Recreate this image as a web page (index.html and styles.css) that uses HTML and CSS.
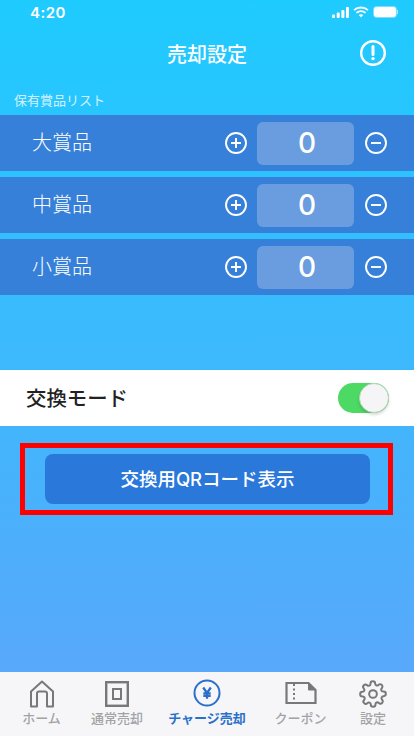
FILE: index.html
```html
<!DOCTYPE html>
<html lang="ja">
<head>
    <meta charset="UTF-8">
    <meta name="viewport" content="width=device-width, initial-scale=1.0">
    <title>売却設定</title>
    <link rel="stylesheet" href="styles.css">
</head>
<body>
<div class="screen">

    <!-- Status bar -->
    <div class="status-bar">
        <span class="status-time">4:20</span>
        <div class="status-icons">
            <svg width="17" height="11" viewBox="0 0 17 11" fill="#fff"><rect x="0" y="7.500" width="3" height="3.500" rx="1"/><rect x="4.700" y="5.500" width="3" height="5.500" rx="1"/><rect x="9.400" y="3" width="3" height="8" rx="1"/><rect x="14" y="0" width="3" height="11" rx="1"/></svg>
            <svg class="wifi" width="16" height="12" viewBox="0 0 16 12" fill="none" stroke="#fff" stroke-width="1.800"><path d="M1 4.200C5 .6 11 .6 15 4.200"/><path d="M3.400 6.800C6 4.500 10 4.500 12.600 6.800"/><path d="M8 11.500l-2.300-2.600c1.300-1 3.300-1 4.600 0z" fill="#fff" stroke="none"/></svg>
            <div class="battery"><div class="battery-body"></div><div class="battery-cap"></div></div>
        </div>
    </div>

    <!-- Header -->
    <div class="header">
        <h1>売却設定</h1>
        <svg class="header-icon" width="26" height="26" viewBox="0 0 26 26" fill="none" stroke="#fff"><circle cx="13" cy="13" r="11.800" stroke-width="2.400"/><path d="M13 6.500v8" stroke-width="3" stroke-linecap="round"/><circle cx="13" cy="18.600" r="1.700" fill="#fff" stroke="none"/></svg>
    </div>

    <div class="list-label">保有賞品リスト</div>

    <div class="prize-list">
        <div class="prize-row">
            <span class="prize-name">大賞品</span>
            <svg class="round-btn" viewBox="0 0 22 22"><circle cx="11" cy="11" r="10"/><path d="M6 11h10M11 6v10"/></svg>
            <div class="count">0</div>
            <svg class="round-btn" viewBox="0 0 22 22"><circle cx="11" cy="11" r="10"/><path d="M6 11h10"/></svg>
        </div>
        <div class="prize-row">
            <span class="prize-name">中賞品</span>
            <svg class="round-btn" viewBox="0 0 22 22"><circle cx="11" cy="11" r="10"/><path d="M6 11h10M11 6v10"/></svg>
            <div class="count">0</div>
            <svg class="round-btn" viewBox="0 0 22 22"><circle cx="11" cy="11" r="10"/><path d="M6 11h10"/></svg>
        </div>
        <div class="prize-row">
            <span class="prize-name">小賞品</span>
            <svg class="round-btn" viewBox="0 0 22 22"><circle cx="11" cy="11" r="10"/><path d="M6 11h10M11 6v10"/></svg>
            <div class="count">0</div>
            <svg class="round-btn" viewBox="0 0 22 22"><circle cx="11" cy="11" r="10"/><path d="M6 11h10"/></svg>
        </div>
    </div>

    <!-- Exchange mode -->
    <div class="mode-row">
        <span class="mode-label">交換モード</span>
        <div class="switch"><div class="switch-knob"></div></div>
    </div>

    <div class="qr-area">
        <div class="qr-frame">
            <button class="qr-button">交換用QRコード表示</button>
        </div>
    </div>

    <!-- Tab bar -->
    <div class="tab-bar">
        <div class="tab tab-home">
            <svg width="28" height="28" viewBox="0 0 28 28" fill="none" stroke="#77777c" stroke-width="2" stroke-linejoin="round"><path d="M3 26.500V11.500L14 1.500l11 10v15h-6V13.500a2 2 0 0 0-2-2h-6a2 2 0 0 0-2 2v13z"/></svg>
            <span>ホーム</span>
        </div>
        <div class="tab tab-normal">
            <svg width="24" height="26" viewBox="0 0 24 26" fill="none" stroke="#77777c"><rect x="1.200" y="1.200" width="21.600" height="23.600" stroke-width="2.400"/><rect x="8" y="8" width="8" height="10" stroke-width="2"/></svg>
            <span>通常売却</span>
        </div>
        <div class="tab tab-charge active">
            <svg width="28" height="28" viewBox="0 0 28 28" fill="none" stroke="#2a70c8" stroke-width="2"><circle cx="14" cy="14" r="12.500"/><path d="M10.200 8.500L14 14l3.800-5.500M14 14v5.800M10.300 14.300h7.400M10.300 16.800h7.400" stroke-width="2.300"/></svg>
            <span>チャージ売却</span>
        </div>
        <div class="tab tab-coupon">
            <svg width="32" height="24" viewBox="0 0 32 24" fill="none" stroke="#77777c" stroke-width="2.200"><path d="M1.500 2h22l7 7v13h-29z"/><path d="M23.500 2l7 7h-7z" fill="#77777c" stroke-width="1"/><path d="M9 3v18" stroke-width="2" stroke-dasharray="2 2.500"/></svg>
            <span>クーポン</span>
        </div>
        <div class="tab tab-setting">
            <svg width="28" height="28" viewBox="0 0 24 24" fill="none" stroke="#77777c" stroke-width="1.700" stroke-linejoin="round"><circle cx="12" cy="12" r="3.300"/><path d="M19.400 15a1.650 1.650 0 0 0 .33 1.820l.06.06a2 2 0 1 1-2.830 2.830l-.06-.06a1.650 1.650 0 0 0-2.800 1.170V21a2 2 0 1 1-4 0v-.09a1.650 1.650 0 0 0-2.800-1.110l-.06.06a2 2 0 1 1-2.830-2.830l.06-.06a1.650 1.650 0 0 0-1.170-2.800H3a2 2 0 1 1 0-4h.09A1.650 1.650 0 0 0 4.200 7.370l-.06-.06a2 2 0 1 1 2.830-2.830l.06.06a1.650 1.650 0 0 0 2.800-1.170V3a2 2 0 1 1 4 0v.09a1.650 1.650 0 0 0 2.800 1.170l.06-.06a2 2 0 1 1 2.830 2.830l-.06.06a1.650 1.650 0 0 0 1.170 2.800H21a2 2 0 1 1 0 4h-.09a1.650 1.650 0 0 0-1.510 1.110z"/></svg>
            <span>設定</span>
        </div>
    </div>

</div>
</body>
</html>
```
FILE: styles.css
```css
* {
    box-sizing: border-box;
}

body {
    margin: 0;
    font-family: "Noto Sans CJK JP", "Noto Sans", sans-serif;
}

.screen {
    width: 414px;
    height: 736px;
    overflow: hidden;
    display: flex;
    flex-direction: column;
    background: linear-gradient(#1ecbff, #5ea5fb);
}

/* Status bar */
.status-bar {
    height: 24px;
    flex-shrink: 0;
    display: flex;
    align-items: center;
    justify-content: space-between;
    padding: 0 16px 0 30px;
    color: white;
}

.status-time {
    font-family: "Inter", sans-serif;
    font-size: 15px;
    font-weight: 600;
    letter-spacing: 0.5px;
}

.status-icons {
    display: flex;
    align-items: center;
    gap: 4px;
}

.wifi {
    margin-right: 1px;
}

.battery {
    display: flex;
    align-items: center;
}

.battery-body {
    width: 22px;
    height: 10px;
    background: white;
    border-radius: 3px;
    box-shadow: 0 0 0 1px rgba(255,255,255,0.4);
}

.battery-cap {
    width: 1px;
    height: 4px;
    margin-left: 1px;
    background: rgba(255,255,255,0.6);
}

/* Header */
.header {
    height: 61px;
    flex-shrink: 0;
    position: relative;
    display: flex;
    align-items: center;
    justify-content: center;
}

.header h1 {
    margin: 0 0 2px;
    color: white;
    font-size: 20px;
    font-weight: 500;
    line-height: 1;
}

.header-icon {
    position: absolute;
    right: 28px;
    top: 16px;
}

.list-label {
    height: 30px;
    flex-shrink: 0;
    padding: 6px 0 0 14px;
    color: rgba(255,255,255,0.8);
    font-size: 13px;
    line-height: 18px;
}

/* Prize rows */
.prize-list {
    display: flex;
    flex-direction: column;
    gap: 6px;
    flex-shrink: 0;
}

.prize-row {
    height: 56px;
    display: flex;
    align-items: center;
    padding: 0 27px 0 32px;
    background-color: #3780d9;
}

.prize-name {
    flex: 1;
    padding-bottom: 3px;
    color: white;
    font-size: 20px;
    font-weight: 300;
    line-height: 1;
}

.round-btn {
    width: 22px;
    height: 22px;
    fill: none;
    stroke: white;
    stroke-width: 1.900;
}

.count {
    width: 97px;
    height: 43px;
    margin: 0 11px 0 10px;
    padding-left: 3px;
    background-color: #6a9ddf;
    border-radius: 6px;
    color: white;
    font-family: "Inter", sans-serif;
    font-size: 28px;
    font-weight: 500;
    line-height: 43px;
    text-align: center;
}

/* Exchange mode */
.mode-row {
    height: 56px;
    flex-shrink: 0;
    margin-top: 75px;
    display: flex;
    align-items: center;
    justify-content: space-between;
    padding: 0 25px 0 26px;
    background-color: white;
}

.mode-label {
    padding-bottom: 2px;
    color: #222;
    font-size: 20.400px;
    font-weight: 500;
    line-height: 1;
}

.switch {
    width: 51px;
    height: 30px;
    padding: 0 0 0 21px;
    background-color: #4cd964;
    border-radius: 15px;
}

.switch-knob {
    width: 30px;
    height: 30px;
    background-color: #f5f5f8;
    border: 1px solid #b5d8bb;
    border-radius: 50%;
    box-shadow: 0 2px 3px rgba(0,0,0,0.15);
}

/* QR button */
.qr-area {
    flex: 1;
    padding: 17px 21px 0 20px;
}

.qr-frame {
    height: 72px;
    padding: 6px 18px 6px 20px;
    border: 5px solid #ff0000;
}

.qr-button {
    display: block;
    width: 100%;
    height: 50px;
    padding: 0 0 2px;
    border: none;
    border-radius: 8px;
    background-color: #2a78da;
    color: white;
    font-family: "Inter", "Noto Sans CJK JP", sans-serif;
    font-size: 18.500px;
    font-weight: 500;
}

/* Tab bar */
.tab-bar {
    height: 64px;
    flex-shrink: 0;
    display: flex;
    background-color: #f6f6f9;
}

.tab {
    display: flex;
    flex-direction: column;
    align-items: center;
    justify-content: flex-end;
    gap: 2px;
    padding-bottom: 10px;
    color: #a3a3a6;
    font-size: 13px;
    font-weight: 500;
    line-height: 16px;
}

.tab-home { width: 83px; }
.tab-normal { width: 68px; }
.tab-charge { width: 112px; }
.tab-coupon { width: 75px; }
.tab-setting { width: 76px; padding-right: 6px; }

.tab-normal svg { margin-bottom: 1px; }
.tab-charge svg { margin-bottom: 1px; }
.tab-coupon svg { margin-bottom: 3px; }

.tab.active {
    color: #2a70c8;
    font-weight: 700;
}
```
